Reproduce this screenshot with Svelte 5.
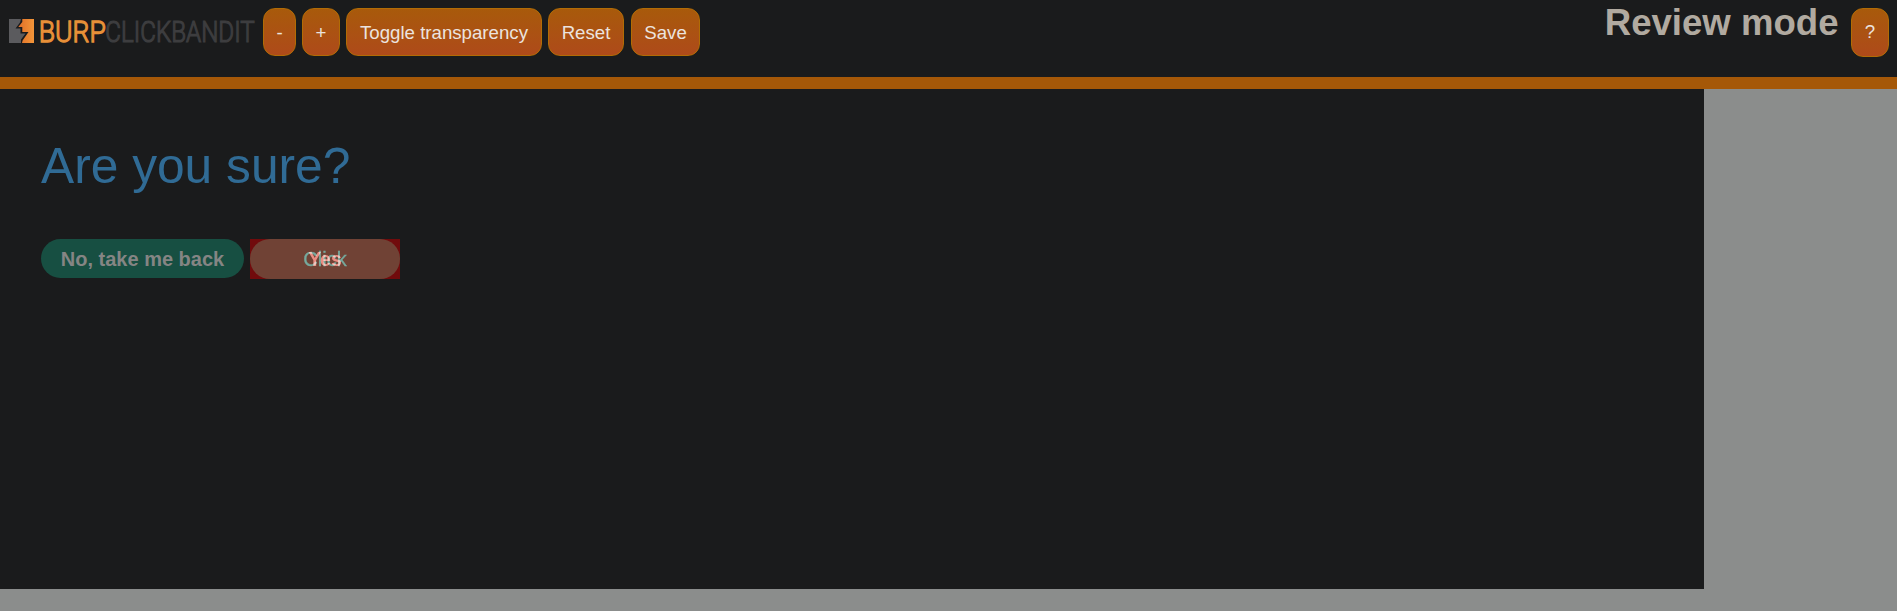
<script>
  const actions = [
    { label: '-', width: 33, gap: 6 },
    { label: '+', width: 38, gap: 6 },
    { label: 'Toggle transparency', width: 196, gap: 6 },
    { label: 'Reset', width: 76, gap: 7 },
    { label: 'Save', width: 69, gap: 0 }
  ];
</script>

<div class="page">
  <header>
    <svg class="logo" width="255" height="48" viewBox="0 0 255 48" role="img" aria-label="Burp Clickbandit">
      <defs>
        <linearGradient id="flame" x1="0" x2="1">
          <stop offset="0" stop-color="#df6f28" />
          <stop offset="1" stop-color="#f39639" />
        </linearGradient>
      </defs>
      <path d="M9 11H21L20 14.5L15.5 20.5H20.5V25.5H25.5L21 31.5V35H9Z" fill="#5b5b5e" />
      <path d="M22.3 11H34V35H22L22.6 32.5L28.5 24H22.3V19H18.3L22.3 14Z" fill="url(#flame)" />
      <text class="burp" x="38.8" y="34.2" textLength="67" lengthAdjust="spacingAndGlyphs">BURP</text>
      <text class="bandit" x="105.3" y="34.2" textLength="149.5" lengthAdjust="spacingAndGlyphs">CLICKBANDIT</text>
    </svg>
    <nav>
      {#each actions as action}
        <button style="width: {action.width}px; margin-right: {action.gap}px">{action.label}</button>
      {/each}
    </nav>
    <strong>Review mode</strong>
    <button class="help">?</button>
  </header>
  <main>
    <h1>Are you sure?</h1>
    <div class="choices">
      <button class="back">No, take me back</button>
      <div class="target">
        <button class="yes" aria-label="Yes"></button>
        <span class="click">Click</span>
        <span class="answer">Yes</span>
      </div>
    </div>
  </main>
</div>

<style>
  :global(body) {
    margin: 0;
    background: #8b8d8c;
  }
  .page {
    height: 611px;
    overflow: hidden;
    font-family: "Liberation Sans", Arial, sans-serif;
  }
  header {
    box-sizing: border-box;
    height: 89px;
    padding: 8px 8px 0 0;
    display: flex;
    align-items: flex-start;
    background: #1a1b1c;
    border-bottom: 12px solid #a55808;
  }
  .logo {
    flex: none;
    margin-right: 8px;
    overflow: visible;
  }
  .logo text {
    font-family: Roboto, sans-serif;
    font-size: 30px;
    font-weight: 300;
  }
  .burp {
    fill: #e89038;
    stroke: #e89038;
    stroke-width: 1.3px;
  }
  .bandit {
    fill: #3d3d3f;
    stroke: #3d3d3f;
    stroke-width: 1.2px;
  }
  nav {
    display: flex;
  }
  button {
    box-sizing: border-box;
    padding: 0;
    font-family: inherit;
    white-space: nowrap;
  }
  header button {
    height: 48px;
    padding-top: 2px;
    border: 1px solid #b16c05;
    border-radius: 12px;
    background: linear-gradient(#a85a0b, #ae4a1a);
    color: #ebe3df;
    font-size: 18.67px;
  }
  strong {
    margin: -7px 12.5px 0 auto;
    color: #b1aaa0;
    font-size: 36.6px;
    line-height: 43px;
  }
  header .help {
    width: 38px;
    height: 49px;
    padding: 0 0 2px;
  }
  main {
    box-sizing: border-box;
    width: 1704px;
    height: 500px;
    padding: 49px 41px;
    background: #1a1b1c;
  }
  h1 {
    margin: 0 0 44px;
    color: #306b95;
    font-size: 49.7px;
    font-weight: 400;
    line-height: 57px;
  }
  .choices {
    display: flex;
    gap: 6px;
  }
  .choices button {
    border: 0;
    border-radius: 20px;
    font-size: 20px;
    font-weight: 700;
  }
  .back {
    width: 203px;
    height: 39px;
    background: #174f42;
    color: #858584;
  }
  .choices .back {
    padding-top: 2px;
  }
  .target {
    position: relative;
    width: 150px;
    height: 40px;
    background: #710b0c;
    isolation: isolate;
  }
  .yes {
    display: block;
    width: 150px;
    height: 40px;
    background: #704235;
  }
  .click,
  .answer {
    position: absolute;
    inset: 0;
    text-align: center;
    line-height: 40px;
  }
  .click {
    color: #76a99d;
    font-size: 20px;
    -webkit-text-stroke: 0.3px #76a99d;
  }
  .answer {
    color: #d96663;
    font-size: 19.5px;
    font-weight: 700;
    mix-blend-mode: screen;
  }
</style>
